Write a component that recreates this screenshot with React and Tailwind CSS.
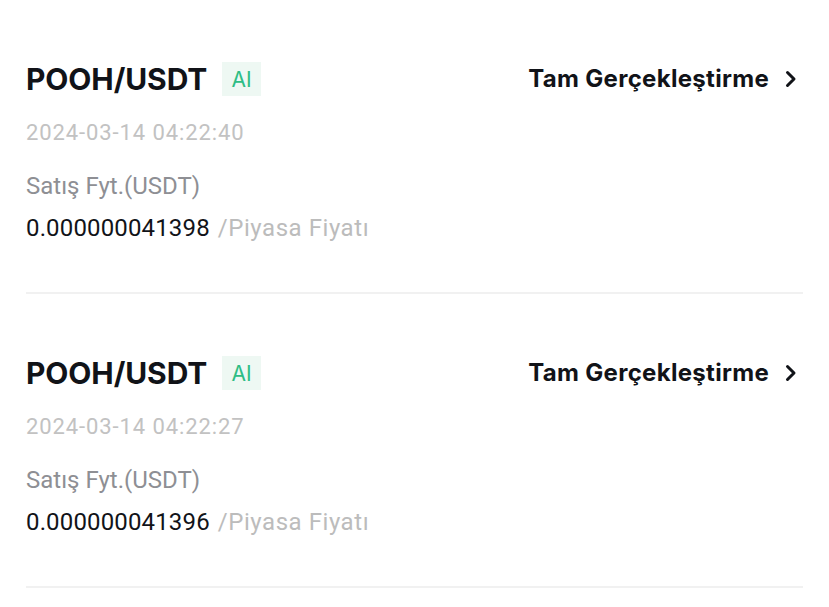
import React from "react";

const items = [
  { time: "2024-03-14 04:22:40", price: "0.000000041398" },
  { time: "2024-03-14 04:22:27", price: "0.000000041396" },
];

function Chevron() {
  return (
    <svg width="14" height="18" viewBox="0 0 14 18" fill="none">
      <path d="M3.5 2.5 L10 9 L3.5 15.5" stroke="#111318" strokeWidth="3" strokeLinecap="round" strokeLinejoin="round" />
    </svg>
  );
}

function Item({ time, price }) {
  return (
    <div className="pt-[62px] pb-[51px] border-b-2 border-[#f1f1f1]">
      <div className="flex items-center justify-between h-[34px]">
        <div className="flex items-center">
          <span className="font-['Inter',sans-serif] font-bold text-[30px] leading-none text-[#111318] tracking-[-0.1px]">POOH/USDT</span>
          <span className="ml-[15px] h-[34px] w-[39px] flex items-center justify-center bg-[#eef8f3] text-[#2ebd85] font-['Inter',sans-serif] text-[21px] leading-none">AI</span>
        </div>
        <div className="flex items-center">
          <span className="font-['Inter',sans-serif] font-bold text-[24px] leading-none text-[#111318] tracking-[0.3px]">Tam Gerçekleştirme</span>
          <span className="ml-[15px] mr-[5px] flex items-center"><Chevron /></span>
        </div>
      </div>
      <div className="mt-[24px] h-[26px] leading-[26px] font-['Roboto',sans-serif] text-[22px] tracking-[0.9px] text-[#c2c2c2]">{time}</div>
      <div className="mt-[27px] h-[26px] leading-[26px] font-['Roboto',sans-serif] text-[24px] text-[#8e8f94]">Satış Fyt.(USDT)</div>
      <div className="mt-[16px] h-[26px] leading-[26px] font-['Roboto',sans-serif] text-[24px] whitespace-nowrap flex">
        <span className="text-[#111318] tracking-[0.15px]">{price}</span>
        <span className="ml-[8px] text-[#bcbcbc] tracking-[0.55px]">/Piyasa Fiyatı</span>
      </div>
    </div>
  );
}

export default function App() {
  return (
    <div className="w-[829px] h-[607px] bg-white overflow-hidden pl-[26px] pr-[26px]">
      {items.map((it) => (
        <Item key={it.time} {...it} />
      ))}
    </div>
  );
}
